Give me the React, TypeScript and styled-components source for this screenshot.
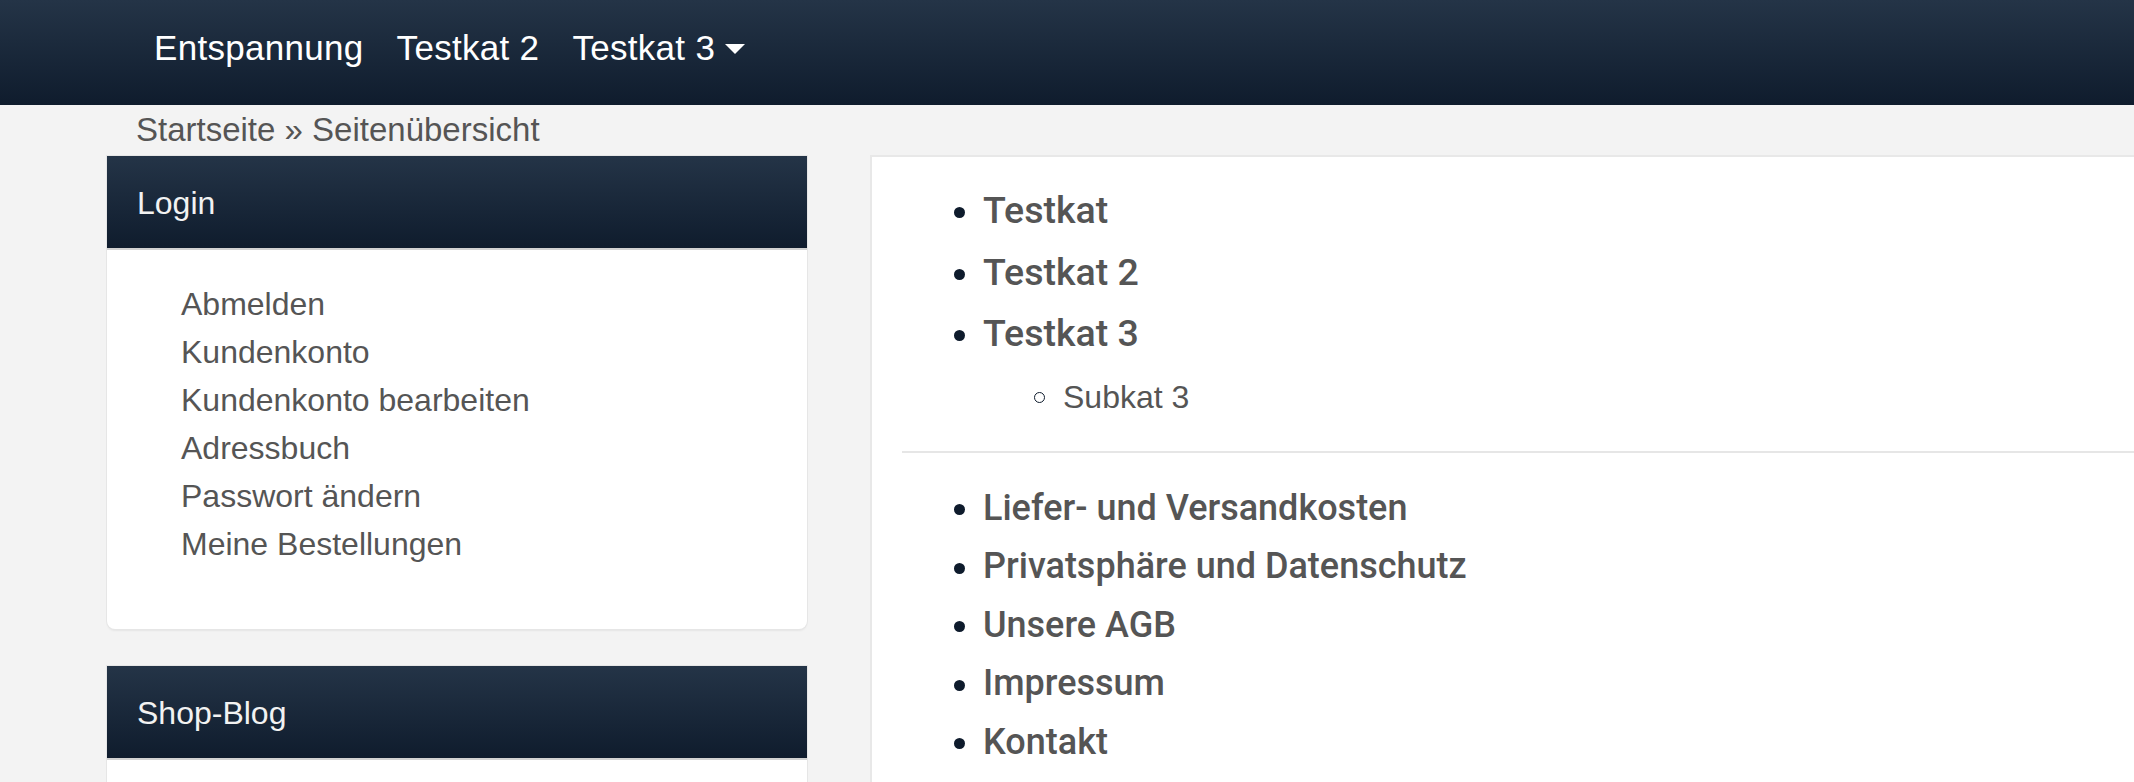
import React from "react";
import styled, { createGlobalStyle } from "styled-components";

const GlobalStyle = createGlobalStyle`
  html, body {
    margin: 0;
    padding: 0;
  }
  body {
    background: #f3f3f3;
    font-family: "Liberation Sans", Arial, sans-serif;
    color: #555555;
    overflow-x: hidden;
  }
  * { box-sizing: border-box; }
`;

const Navbar = styled.nav`
  height: 105px;
  background: linear-gradient(to bottom, #243447 0%, #0f1c2d 100%);
  display: flex;
  align-items: center;
  gap: 33px;
  padding: 0 0 9px 154px;
`;

const NavLink = styled.a`
  color: #ffffff;
  font-size: 35px;
  line-height: 48px;
  letter-spacing: 0.3px;
  text-decoration: none;
  display: flex;
  align-items: center;
`;

const Caret = styled.span`
  display: inline-block;
  width: 0;
  height: 0;
  margin-left: 10px;
  margin-top: 2px;
  border-top: 10px solid #ffffff;
  border-left: 10px solid transparent;
  border-right: 10px solid transparent;
`;

const Breadcrumb = styled.div`
  height: 50px;
  line-height: 50px;
  padding-left: 136px;
  font-size: 33px;
  color: #555555;
`;

const Main = styled.div`
  display: flex;
  align-items: flex-start;
  gap: 63px;
  padding-left: 107px;
`;

const Sidebar = styled.aside`
  width: 700px;
  flex-shrink: 0;
  display: flex;
  flex-direction: column;
  gap: 37px;
  padding-top: 1px;
`;

const Card = styled.section`
  background: #ffffff;
  border-radius: 0 0 8px 8px;
  box-shadow: 0 0 0 1px #e6e6e6, 0 2px 2px rgba(0, 0, 0, 0.06);
  overflow: hidden;
`;

const CardHeader = styled.h3`
  margin: 0;
  height: 94px;
  padding: 2px 30px 0 30px;
  display: flex;
  align-items: center;
  background: linear-gradient(to bottom, #243447 0%, #0f1c2d 100%);
  border-bottom: 2px solid #d2d2d2;
  color: #f2f2f2;
  font-size: 32px;
  font-weight: normal;
`;

const CardBody = styled.div<{ $minHeight?: number }>`
  padding: 31px 30px 61px 74px;
  min-height: ${(p) => (p.$minHeight ? `${p.$minHeight}px` : "auto")};
`;

const LinkList = styled.ul`
  list-style: none;
  margin: 0;
  padding: 0;
`;

const LinkItem = styled.li`
  font-size: 32px;
  line-height: 47.9px;
  color: #555555;
`;

const Content = styled.main`
  width: 1400px;
  flex-shrink: 0;
  background: #ffffff;
  border: 2px solid #e8e8e8;
  padding: 23px 30px 30px 30px;
`;

const SiteList = styled.ul<{ $lineHeight: number; $size: number }>`
  list-style: none;
  margin: 0;
  padding: 0 0 0 52px;
  font-family: Roboto, "Liberation Sans", sans-serif;
  font-weight: 500;
  font-size: ${(p) => p.$size}px;
  line-height: ${(p) => p.$lineHeight}px;
  color: #555555;
`;

const SiteItem = styled.li`
  display: flex;
  align-items: center;
  gap: 18px;
`;

const Disc = styled.span`
  width: 11px;
  height: 11px;
  border-radius: 50%;
  background: #0e1b2c;
  flex-shrink: 0;
  margin-top: 4px;
`;

const SubList = styled.ul`
  list-style: none;
  margin: 8px 0 0 0;
  padding: 0 0 0 132px;
  font-family: "Liberation Sans", Arial, sans-serif;
  font-weight: normal;
  font-size: 32px;
  line-height: 48px;
`;

const Circle = styled.span`
  width: 11px;
  height: 11px;
  border-radius: 50%;
  border: 1.5px solid #0e1b2c;
  flex-shrink: 0;
  margin-top: 2px;
`;

const SubItem = styled.li`
  display: flex;
  align-items: center;
  gap: 18px;
`;

const Divider = styled.hr`
  border: 0;
  border-top: 2px solid #e6e6e6;
  margin: 30px 0 26px 0;
`;

const loginLinks = [
  "Abmelden",
  "Kundenkonto",
  "Kundenkonto bearbeiten",
  "Adressbuch",
  "Passwort ändern",
  "Meine Bestellungen",
];

const infoLinks = [
  "Liefer- und Versandkosten",
  "Privatsphäre und Datenschutz",
  "Unsere AGB",
  "Impressum",
  "Kontakt",
];

export default function App() {
  return (
    <>
      <GlobalStyle />
      <Navbar>
        <NavLink>Entspannung</NavLink>
        <NavLink>Testkat 2</NavLink>
        <NavLink>
          Testkat 3<Caret />
        </NavLink>
      </Navbar>
      <Breadcrumb>Startseite » Seitenübersicht</Breadcrumb>
      <Main>
        <Sidebar>
          <Card>
            <CardHeader>Login</CardHeader>
            <CardBody>
              <LinkList>
                {loginLinks.map((l) => (
                  <LinkItem key={l}>{l}</LinkItem>
                ))}
              </LinkList>
            </CardBody>
          </Card>
          <Card>
            <CardHeader>Shop-Blog</CardHeader>
            <CardBody $minHeight={200} />
          </Card>
        </Sidebar>
        <Content>
          <SiteList $size={37.5} $lineHeight={61.5}>
            <SiteItem>
              <Disc />
              Testkat
            </SiteItem>
            <SiteItem>
              <Disc />
              Testkat 2
            </SiteItem>
            <SiteItem>
              <Disc />
              Testkat 3
            </SiteItem>
          </SiteList>
          <SubList>
            <SubItem>
              <Circle />
              Subkat 3
            </SubItem>
          </SubList>
          <Divider />
          <SiteList $size={36} $lineHeight={58.5}>
            {infoLinks.map((l) => (
              <SiteItem key={l}>
                <Disc />
                {l}
              </SiteItem>
            ))}
          </SiteList>
        </Content>
      </Main>
    </>
  );
}
